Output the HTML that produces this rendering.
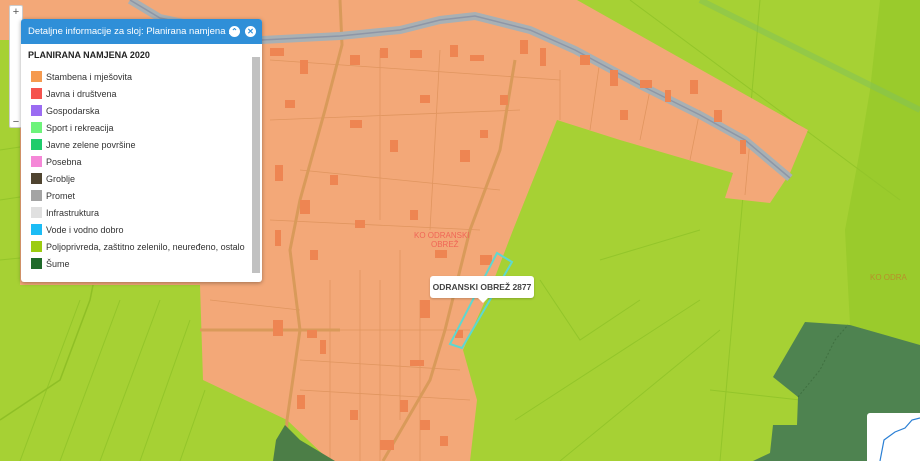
<!DOCTYPE html>
<html><head><meta charset="utf-8"><style>
*{margin:0;padding:0;box-sizing:border-box}
body{width:920px;height:461px;overflow:hidden;position:relative;font-family:"Liberation Sans",sans-serif;background:#a6d134}
svg.map{position:absolute;left:0;top:0}
.zoomc{position:absolute;left:9px;top:5px;width:14px;height:123px;background:#fff;border:1px solid #ccc;border-radius:2px}
.zoomc span{position:absolute;left:0;width:12px;text-align:center;font-size:11px;color:#555;line-height:12px}
.panel{position:absolute;left:21px;top:19px;width:241px;height:263px;background:#fff;box-shadow:0 1px 4px rgba(0,0,0,.35);border-radius:3px}
.hdr{height:25px;background:#2f8fd8;border-radius:3px 3px 0 0;color:#fff;font-size:9.5px;line-height:25px;padding-left:7px;position:relative}
.hdr i{position:absolute;top:7px;width:11px;height:11px;border-radius:50%;background:#fff;color:#2f8fd8;font-style:normal;font-size:8px;line-height:11px;text-align:center;font-weight:bold}
.ttl{position:absolute;left:7px;top:31px;font-size:9px;font-weight:bold;color:#222}
.it{position:absolute;left:10px;font-size:9px;color:#333;height:12px;line-height:12px}
.it b{display:inline-block;width:11px;height:11px;vertical-align:top;margin-right:4px}
.sb{position:absolute;left:231px;top:38px;width:8px;height:216px;background:#c1c1c1}
.tip{position:absolute;left:430px;top:276px;width:104px;height:22px;background:#fff;border-radius:3px;font-size:8.5px;font-weight:bold;color:#444;text-align:center;line-height:22px;box-shadow:0 1px 2px rgba(0,0,0,.2)}
.tip:after{content:"";position:absolute;left:48px;bottom:-5px;border:5px solid transparent;border-top-color:#fff;border-bottom:0}
</style></head><body>
<svg class="map" width="920" height="461" viewBox="0 0 920 461">
<rect width="920" height="461" fill="#a6d134"/>
<polygon points="880,0 920,0 920,345 850,325 845,230 860,150 870,90" fill="#9acb2c"/>
<g stroke="#93c52a" stroke-width="1" fill="none">
<path d="M0 150 L200 120 M0 200 L200 170 M0 260 L200 240 M20 461 L80 300 M60 461 L120 300 M100 461 L160 300 M140 461 L190 320 M180 461 L205 390 M515 420 L700 300 M560 461 L720 330 M600 260 L700 230 M710 390 L800 400 M720 461 L760 0 M630 0 L900 200 M540 280 L580 340 L640 300"/>
<path d="M0 420 L60 380 L90 300 L100 250" stroke="#8fbf26" stroke-width="1.5"/>
<path d="M700 0 L920 110" stroke="#7fc25a" stroke-width="6" opacity=".5"/>
</g>
<polygon points="0,0 577,0 808,130 790,173 770,203 725,198 733,173 620,140 557,120 537,170 513,230 490,290 463,350 477,400 470,461 330,461 287,420 245,400 203,380 200,285 20,285 20,40 0,40" fill="#f3a878"/>
<g stroke="#e0955f" stroke-width=".8" fill="none">
<path d="M210 300 L300 310 M210 330 L470 330 M300 360 L460 370 M300 390 L470 400 M360 270 L360 461 M400 250 L400 420 M420 300 L420 461 M270 60 L560 80 M270 120 L520 110 M300 170 L500 190 M380 50 L380 220 M440 50 L430 230 M560 70 L560 120 M600 60 L590 130 M650 90 L640 140 M700 110 L690 160 M750 140 L745 195 M270 220 L480 230 M330 280 L330 461 M380 280 L380 461"/>
</g>
<g stroke="#d99a5a" stroke-width="3" fill="none">
<path d="M340 0 L342 45 L325 110 L300 200 L290 250 L300 330 L287 420 L285 461"/>
<path d="M515 60 L500 150 L470 230 L445 330 L430 380 L383 461"/>
<path d="M200 330 L340 330"/>
</g>
<path d="M130 0 L160 18 L262 40 L340 36 L400 30 L440 20 L475 16 L530 30 L575 50 L640 85 L700 115 L745 140 L790 178" stroke="#a8b0b4" stroke-width="8" fill="none"/>
<path d="M130 0 L160 18 L262 40 L340 36 L400 30 L440 20 L475 16 L530 30 L575 50 L640 85 L700 115 L745 140 L790 178" stroke="#8e96a6" stroke-width="1.5" fill="none"/>
<g fill="#ee8552">
<rect x="270" y="48" width="14" height="8"/><rect x="300" y="60" width="8" height="14"/><rect x="350" y="55" width="10" height="10"/><rect x="380" y="48" width="8" height="10"/><rect x="410" y="50" width="12" height="8"/><rect x="450" y="45" width="8" height="12"/><rect x="470" y="55" width="14" height="6"/><rect x="520" y="40" width="8" height="14"/><rect x="540" y="48" width="6" height="18"/><rect x="580" y="55" width="10" height="10"/><rect x="610" y="70" width="8" height="16"/><rect x="640" y="80" width="12" height="8"/><rect x="665" y="90" width="6" height="12"/><rect x="690" y="80" width="8" height="14"/><rect x="714" y="110" width="8" height="12"/><rect x="740" y="140" width="6" height="14"/>
<rect x="275" y="165" width="8" height="16"/><rect x="300" y="200" width="10" height="14"/><rect x="330" y="175" width="8" height="10"/><rect x="275" y="230" width="6" height="16"/><rect x="310" y="250" width="8" height="10"/><rect x="273" y="320" width="10" height="16"/><rect x="307" y="330" width="10" height="8"/><rect x="320" y="340" width="6" height="14"/><rect x="297" y="395" width="8" height="14"/><rect x="420" y="300" width="10" height="18"/><rect x="410" y="360" width="14" height="6"/><rect x="400" y="400" width="8" height="12"/><rect x="420" y="420" width="10" height="10"/><rect x="440" y="436" width="8" height="10"/><rect x="435" y="250" width="12" height="8"/><rect x="480" y="255" width="12" height="10"/><rect x="455" y="330" width="8" height="8"/><rect x="380" y="440" width="14" height="10"/><rect x="350" y="410" width="8" height="10"/>
<rect x="460" y="150" width="10" height="12"/><rect x="480" y="130" width="8" height="8"/><rect x="350" y="120" width="12" height="8"/><rect x="390" y="140" width="8" height="12"/><rect x="420" y="95" width="10" height="8"/><rect x="500" y="95" width="8" height="10"/><rect x="285" y="100" width="10" height="8"/><rect x="355" y="220" width="10" height="8"/><rect x="410" y="210" width="8" height="10"/><rect x="620" y="110" width="8" height="10"/>
</g>
<polygon points="285,425 300,440 335,461 273,461 276,440" fill="#4c7e47"/>
<polygon points="805,322 850,325 920,345 920,461 753,461 770,453 773,425 797,425 798,397 773,377" fill="#4e8350"/>
<path d="M798 397 L820 370 L835 340 L848 325" stroke="#3f7040" stroke-dasharray="2 2" fill="none"/>
<polygon points="497,253 512,262 462,348 450,344" fill="none" stroke="#5ed8d0" stroke-width="2"/>
<text x="414" y="238" font-size="8" fill="#f06656" font-family="Liberation Sans">KO ODRANSKI</text>
<text x="431" y="247" font-size="8" fill="#f06656" font-family="Liberation Sans">OBREŽ</text>
<text x="870" y="280" font-size="8" fill="#b8902a" font-family="Liberation Sans">KO ODRA</text>
<rect x="867" y="413" width="60" height="60" rx="3" fill="#fff"/>
<path d="M880 461 L884 440 L895 432 L905 428 L912 420 L920 418" stroke="#2a7fd4" stroke-width="1.2" fill="none"/>
</svg>
<div class="zoomc"><span style="top:0">+</span><span style="top:110px">−</span></div>
<div class="panel">
<div class="hdr">Detaljne informacije za sloj: Planirana namjena ...<i style="left:208px">⌃</i><i style="left:224px">✕</i></div>
<div class="ttl">PLANIRANA NAMJENA 2020</div>
<div class="it" style="top:52px"><b style="background:#f59a4f"></b>Stambena i mješovita</div>
<div class="it" style="top:69px"><b style="background:#f5534e"></b>Javna i društvena</div>
<div class="it" style="top:86px"><b style="background:#9b6cf2"></b>Gospodarska</div>
<div class="it" style="top:103px"><b style="background:#6df37a"></b>Sport i rekreacija</div>
<div class="it" style="top:120px"><b style="background:#1fcc6c"></b>Javne zelene površine</div>
<div class="it" style="top:137px"><b style="background:#f587d7"></b>Posebna</div>
<div class="it" style="top:154px"><b style="background:#4f4430"></b>Groblje</div>
<div class="it" style="top:171px"><b style="background:#a4a4a4"></b>Promet</div>
<div class="it" style="top:188px"><b style="background:#e0e0e0"></b>Infrastruktura</div>
<div class="it" style="top:205px"><b style="background:#1cbcf5"></b>Vode i vodno dobro</div>
<div class="it" style="top:222px"><b style="background:#9ccc10"></b>Poljoprivreda, zaštitno zelenilo, neuređeno, ostalo</div>
<div class="it" style="top:239px"><b style="background:#1f6a2a"></b>Šume</div>
<div class="sb"></div>
</div>
<div class="tip">ODRANSKI OBREŽ 2877</div>
</body></html>
